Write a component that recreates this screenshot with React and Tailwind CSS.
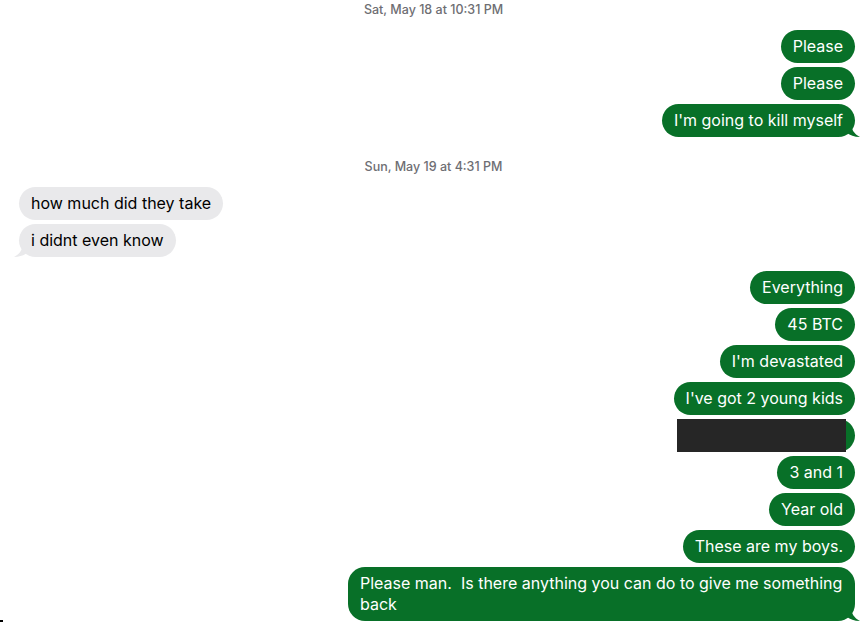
const FONT = { fontFamily: '"Helvetica Neue", Inter, "Liberation Sans", Arial, sans-serif' };

function Stamp({ day, time, className = "" }) {
  return (
    <div className={`text-center text-[12.5px] font-medium leading-[20px] text-[#6e6e73] ${className}`}>
      {day} at {time}
    </div>
  );
}

function TailRight() {
  return (
    <svg className="absolute -right-[6px] bottom-0" width="14" height="14" viewBox="0 0 14 14">
      <path d="M0 0 L4 0 C4 6 7 11 13 14 C7 14 3 12 0 10 Z" fill="#087028" />
    </svg>
  );
}

function TailLeft() {
  return (
    <svg className="absolute -left-[6px] bottom-0" width="14" height="14" viewBox="0 0 14 14">
      <path d="M14 0 L10 0 C10 6 7 11 1 14 C7 14 11 12 14 10 Z" fill="#e9e9eb" />
    </svg>
  );
}

function Sent({ children, tail, redact }) {
  return (
    <div className="flex justify-end">
      <div className="relative rounded-[17px] bg-[#087028] px-[12px] py-[6px] text-[16px] leading-[21px] text-white max-w-[507px]">
        {children}
        {tail && <TailRight />}
        {redact && <div className="absolute left-[-13px] top-0 h-[33px] w-[169px] bg-[#262626]" />}
      </div>
    </div>
  );
}

function Received({ children, tail }) {
  return (
    <div className="flex justify-start">
      <div className="relative rounded-[17px] bg-[#e9e9eb] px-[12px] py-[6px] text-[16px] leading-[21px] text-black">
        {children}
        {tail && <TailLeft />}
      </div>
    </div>
  );
}

export default function App() {
  return (
    <div className="relative h-[626px] w-[867px] overflow-hidden bg-white" style={FONT}>
      <Stamp day="Sat, May 18" time="10:31 PM" />
      <div className="mt-[10px] flex flex-col gap-[4px] pr-[12px]">
        <Sent>Please</Sent>
        <Sent>Please</Sent>
        <Sent tail>I'm going to kill myself</Sent>
      </div>
      <Stamp day="Sun, May 19" time="4:31 PM" className="mt-[20px]" />
      <div className="mt-[10px] flex flex-col gap-[4px] pl-[19px]">
        <Received>how much did they take</Received>
        <Received tail>i didnt even know</Received>
      </div>
      <div className="mt-[14px] flex flex-col gap-[4px] pr-[12px]">
        <Sent>Everything</Sent>
        <Sent>45 BTC</Sent>
        <Sent>I'm devastated</Sent>
        <Sent>I've got 2 young kids</Sent>
        <Sent redact>
          <span className="block h-[21px] w-[141px]" />
        </Sent>
        <Sent>3 and 1</Sent>
        <Sent>Year old</Sent>
        <Sent>These are my boys.</Sent>
        <Sent tail>
          Please man.&nbsp; Is there anything you can do to give me something back
        </Sent>
      </div>
      <div className="absolute bottom-[4px] left-0 h-[2px] w-[3px] bg-black" />
    </div>
  );
}
